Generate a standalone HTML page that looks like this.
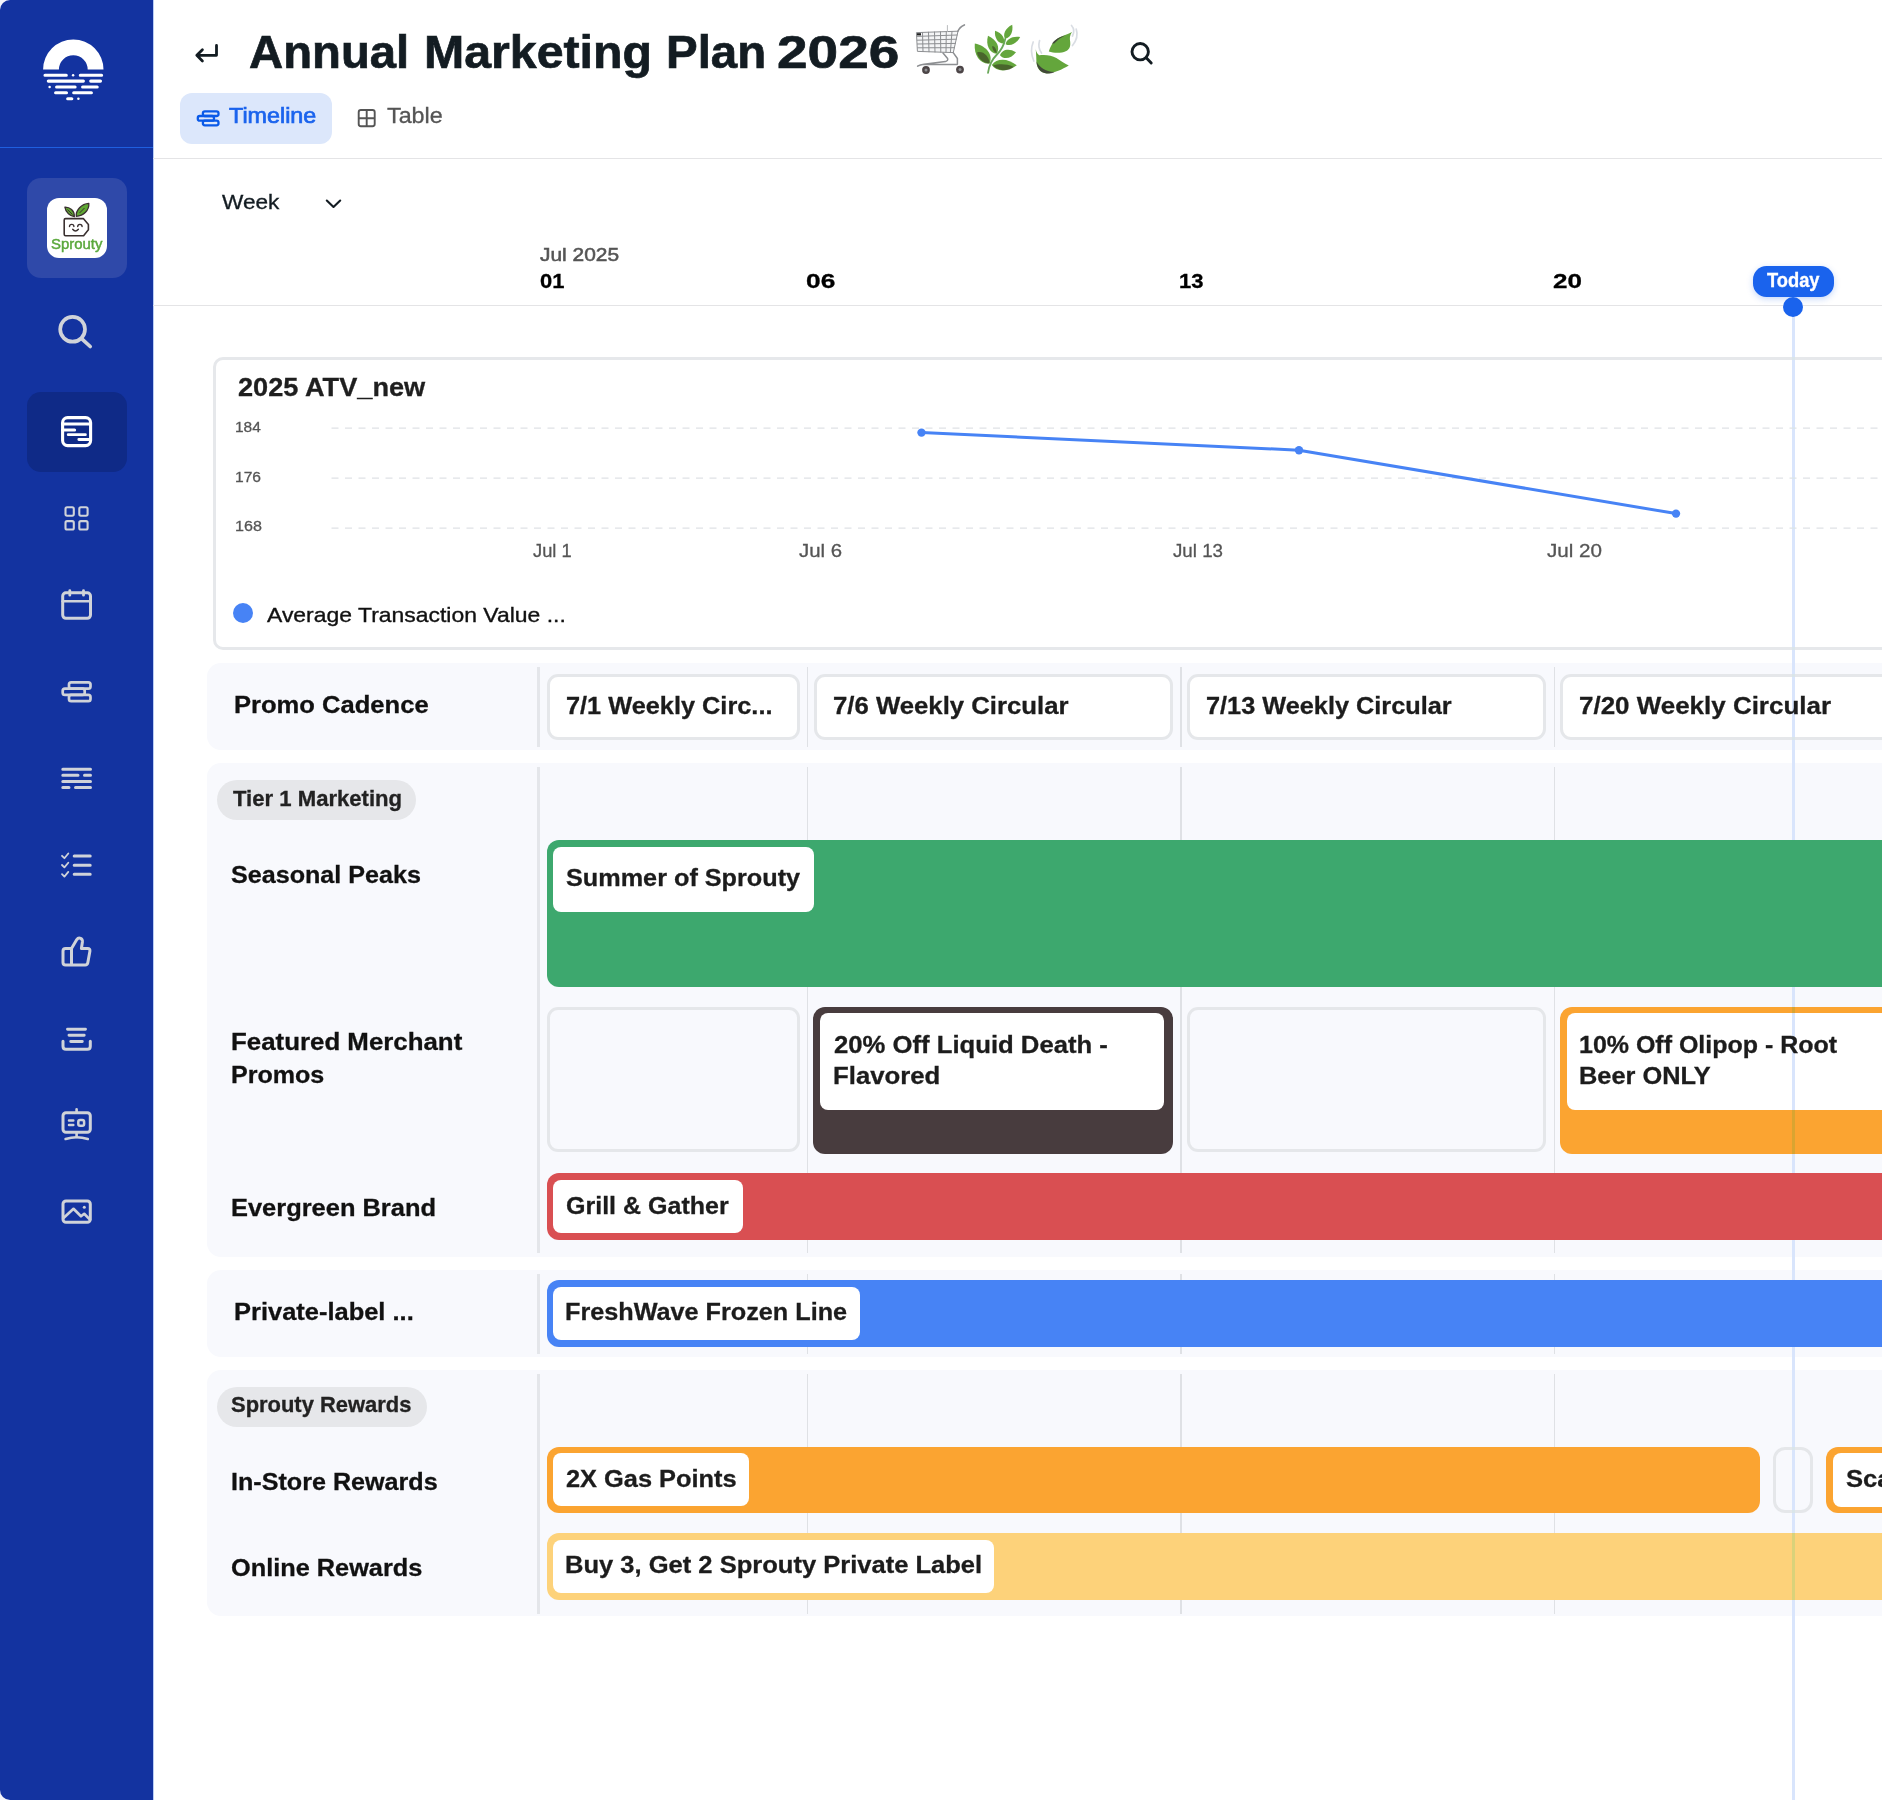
<!DOCTYPE html>
<html lang="en"><head><meta charset="utf-8"><title>Annual Marketing Plan 2026</title>
<style>
html,body{margin:0;padding:0;background:#f3f5fb;}
body{width:1882px;height:1800px;overflow:hidden;font-family:"Liberation Sans",sans-serif;}
#app{position:relative;width:1882px;height:1800px;overflow:hidden;background:#f3f5fb;}
#app div,#app span,#app svg{position:absolute;box-sizing:border-box;}
.t{white-space:nowrap;line-height:1;transform-origin:0 50%;display:block;}
/* sidebar */
#side{left:0;top:0;width:153px;height:1800px;background:#1333a0;border-top-left-radius:10px;border-bottom-left-radius:10px;}
#main{left:153px;top:0;width:1729px;height:1800px;background:#fff;border-left:1px solid #b9cdf5;}
#sdiv{left:0;top:147px;width:153px;height:1px;background:#1f5fe0;}
#brandbox{left:27px;top:178px;width:100px;height:100px;border-radius:14px;background:#2f49a9;}
#brandlogo{left:47px;top:198px;width:60px;height:60px;border-radius:12px;background:#fff;}
#navact{left:27px;top:392px;width:100px;height:80px;border-radius:14px;background:#0f2a87;}
/* header */
.hline{left:153px;width:1729px;height:1px;background:#e4e4e6;}
#tabtl{left:180px;top:93px;width:152px;height:51px;border-radius:12px;background:#dce7fb;}
/* today */
#todaypill{left:1753.2px;top:266.1px;width:80.6px;height:30.7px;border-radius:13.5px;background:#1a63ed;box-shadow:0 2px 6px rgba(26,99,237,.25);}
#todaydot{left:1783.1px;top:296.8px;width:20.2px;height:20.2px;border-radius:50%;background:#1a63ed;}
#todayline{left:1791.9px;top:306px;width:3px;height:1494px;background:#d9e5fc;mix-blend-mode:darken;}
/* chart card */
#chart{left:213.4px;top:357px;width:1700px;height:292.6px;border:3.3px solid #e6e8eb;border-radius:10px;background:#fff;}
#legdot{left:233px;top:602.5px;width:20px;height:20px;border-radius:50%;background:#4783f5;}
/* row panels */
.panel{left:206.8px;width:1700px;background:#f8f9fd;border-radius:14px;}
.vdiv{left:537px;width:2.9px;background:#e4e6ea;}
.wdiv{width:1.5px;background:#dfe1e5;}
.card{border:3px solid #e5e7ea;border-radius:11px;}
.card.w{background:#fff;}
.pill{background:#e6e7ea;border-radius:20px;height:40px;left:216.5px;}
.bar{border-radius:12px;}
.lab{background:#fff;border-radius:8px;}

</style></head>
<body>
<div id="app">
<div id="main"></div>
<div id="side"></div>
<div id="sdiv"></div>
<div id="brandbox"></div>
<div id="brandlogo"></div>
<div id="navact"></div>
<!-- sidebar logo -->
<svg style="left:0;top:0" width="153" height="147" viewBox="0 0 153 147">
  <path d="M43.1 69.6 A30.2 30.2 0 0 1 103.5 69.6 H87.7 A14.4 14.4 0 0 0 58.9 69.6 Z" fill="#fff"/>
  <g stroke="#fff" stroke-width="3.1" stroke-linecap="round" fill="none">
    <path d="M45 75.2H66.3M80.3 75.2H101.6"/>
    <path d="M48.3 81.1H83.4M90.7 81.1H100.5"/>
    <path d="M56.6 87H75.1M82.6 87H97.2"/>
    <path d="M55.6 92.8H66.5M73.7 92.8H91.4"/>
    <path d="M67.7 98.7H71.8"/>
  </g>
  <g fill="#fff"><circle cx="73.1" cy="75.2" r="1.25"/><circle cx="49.6" cy="87" r="1.25"/><circle cx="78.4" cy="98.7" r="1.25"/></g>
</svg>
<!-- brand logo art -->
<svg style="left:47px;top:198px" width="60" height="60" viewBox="47 198 60 60">
  <path d="M74.3 216.6C70.5 216.2 65.6 212.6 64.9 207.2C69.8 207 74.6 210.6 74.3 216.6Z" fill="#5fa832" stroke="#3a3030" stroke-width="1.3" stroke-linejoin="round"/>
  <path d="M76.3 216.3C75.6 210.2 81.5 203.8 88.8 203.4C89.4 210.2 83.6 216 76.3 216.3Z" fill="#5fa832" stroke="#3a3030" stroke-width="1.3" stroke-linejoin="round"/>
  <path d="M67.5 209.5L72.5 214.5M79.5 213L84.5 208" stroke="#3a3030" stroke-width="1" fill="none"/>
  <path d="M65.6 218.6H83.3L88.4 224.6V229.8L83.6 235.7H65.6Q64.2 235.7 64.2 234.3V220Q64.2 218.6 65.6 218.6Z" fill="#fff" stroke="#3a3030" stroke-width="1.6" stroke-linejoin="round"/>
  <path d="M69.5 226.6A2.2 2.2 0 0 1 73.9 226.6M77.7 226.6A2.2 2.2 0 0 1 82.1 226.6" fill="none" stroke="#3a3030" stroke-width="1.4" stroke-linecap="round"/>
  <path d="M72.7 229.3Q75.4 232.6 78.4 229.3" fill="none" stroke="#3a3030" stroke-width="1.4" stroke-linecap="round"/>
</svg>
<!-- search -->
<svg style="left:47px;top:300px" width="60" height="60" viewBox="47 300 60 60" fill="none" stroke="#d0d3d9" stroke-width="3.7" stroke-linecap="round">
  <circle cx="72.6" cy="329.3" r="12.4"/><path d="M81.6 338.6L90.2 346.5"/>
</svg>
<!-- active: plan icon -->
<svg style="left:47px;top:402px" width="60" height="60" viewBox="47 402 60 60" fill="none" stroke="#fff" stroke-width="3.1" stroke-linecap="round">
  <rect x="62.6" y="417.6" width="28" height="28" rx="5"/>
  <path d="M62.6 424H90.6M62.6 430H74.6"/>
  <path d="M68.2 434.7H85.4M78.8 439.5H90" stroke-width="2.8"/>
</svg>
<!-- grid -->
<svg style="left:47px;top:488px" width="60" height="60" viewBox="47 488 60 60" fill="none" stroke="#d0d3d9" stroke-width="2.1">
  <rect x="65.5" y="507.3" width="8.3" height="8.4" rx="1.6"/><rect x="79.3" y="507.3" width="8.3" height="8.4" rx="1.6"/>
  <rect x="65.5" y="521.1" width="8.3" height="8.4" rx="1.6"/><rect x="79.3" y="521.1" width="8.3" height="8.4" rx="1.6"/>
</svg>
<!-- calendar -->
<svg style="left:47px;top:575px" width="60" height="60" viewBox="47 575 60 60" fill="none" stroke="#d0d3d9" stroke-width="3" stroke-linecap="round">
  <rect x="62.7" y="592.8" width="27.8" height="25.5" rx="3.2"/>
  <path d="M62.7 601.2H90.5" stroke-width="2.6"/>
  <path d="M69.8 590.6V595.2M83.5 590.6V595.2" stroke-width="2.8"/>
</svg>
<!-- timeline -->
<svg style="left:47px;top:661px" width="60" height="60" viewBox="47 661 60 60" fill="none" stroke="#d0d3d9" stroke-width="2.7">
  <rect x="69" y="682.3" width="21.5" height="6.3" rx="2.2"/>
  <rect x="62.7" y="688.6" width="22" height="6.3" rx="2.2"/>
  <rect x="69" y="694.9" width="21.5" height="6.3" rx="2.2"/>
</svg>
<!-- lines -->
<svg style="left:47px;top:748px" width="60" height="60" viewBox="47 748 60 60" fill="none" stroke="#d0d3d9" stroke-width="3" stroke-linecap="round">
  <path d="M62.8 769.2H90.5M62.8 775.3H78M84.5 775.3H90.5M62.8 781.5H90.5M62.8 787.5H69M75.5 787.5H90.5"/>
</svg>
<!-- checklist -->
<svg style="left:47px;top:835px" width="60" height="60" viewBox="47 835 60 60" fill="none" stroke="#d0d3d9" stroke-width="3" stroke-linecap="round" stroke-linejoin="round">
  <path d="M74.2 856H90.2M74.2 865.2H90.2M74.2 874.3H90.2"/>
  <path d="M62 855.8L64.4 858.2L68.3 853.5M62 865L64.4 867.4L68.3 862.7M62 874.2L64.4 876.6L68.3 871.9" stroke-width="1.8"/>
</svg>
<!-- thumbs up -->
<svg style="left:47px;top:921px" width="60" height="60" viewBox="47 921 60 60" fill="none" stroke="#d0d3d9" stroke-width="3" stroke-linejoin="round" stroke-linecap="round">
  <path d="M71.5 948.5L76.8 939.6Q78.3 937.3 80.6 938.3Q82.7 939.3 82.4 942L81.4 948.5H87.6Q90.4 948.5 89.9 951.2L87.8 962.8Q87.4 965 85.2 965H65.6Q63 965 63 962.4V951.1Q63 948.5 65.6 948.5H71.5V965"/>
</svg>
<!-- inbox stack -->
<svg style="left:47px;top:1008px" width="60" height="60" viewBox="47 1008 60 60" fill="none" stroke="#d0d3d9" stroke-width="3" stroke-linecap="round" stroke-linejoin="round">
  <path d="M67.5 1029.2H85.5M69 1035.3H84.2M70.7 1041.5H82.3" stroke-width="2.9"/>
  <path d="M63 1041.2V1046.2Q63 1049.2 66 1049.2H87.3Q90.3 1049.2 90.3 1046.2V1041.2"/>
</svg>
<!-- presentation -->
<svg style="left:47px;top:1094px" width="60" height="60" viewBox="47 1094 60 60" fill="none" stroke="#d0d3d9" stroke-width="3" stroke-linecap="round" stroke-linejoin="round">
  <rect x="63" y="1112.7" width="27.3" height="19.6" rx="3"/>
  <path d="M76.6 1109.3V1112.5M76.6 1132.5V1137" stroke-width="2.6"/>
  <path d="M65.6 1139Q76.6 1135.6 87.8 1139" stroke-width="2.6"/>
  <path d="M69 1120.4H73.3M69 1125.1H73.3" stroke-width="2.5"/>
  <rect x="78.3" y="1120" width="5.8" height="5.8" rx="1.8" stroke-width="2.5"/>
</svg>
<!-- image -->
<svg style="left:47px;top:1181px" width="60" height="60" viewBox="47 1181 60 60" fill="none" stroke="#d0d3d9" stroke-width="3" stroke-linejoin="round" stroke-linecap="round">
  <rect x="63" y="1201" width="27.3" height="21.3" rx="3"/>
  <path d="M63.5 1218L73.5 1208.8L81 1216.3L84.2 1213.8L90 1219.6" stroke-width="2.7"/>
  <circle cx="84.3" cy="1207.2" r="1.5" fill="#d0d3d9" stroke="none"/>
</svg>


<!-- header -->
<div class="hline" style="top:158px"></div>
<div class="hline" style="top:305px"></div>
<div id="tabtl"></div>
<!-- back arrow -->
<svg style="left:185px;top:30px" width="60" height="60" viewBox="185 30 60 60" fill="none" stroke="#131c22" stroke-width="2.8" stroke-linecap="round" stroke-linejoin="round">
  <path d="M216.5 45.5V55.3H197.2M202.4 49.8L196.8 55.3L202.4 60.9"/>
</svg>
<!-- timeline tab icon -->
<svg style="left:190px;top:98px" width="40" height="40" viewBox="190 98 40 40" fill="none" stroke="#0a5ae8" stroke-width="2.3">
  <rect x="202.9" y="111.3" width="15.6" height="4.7" rx="2"/>
  <rect x="197.8" y="116" width="16.2" height="4.7" rx="2"/>
  <rect x="202.9" y="120.7" width="15.6" height="4.6" rx="2"/>
</svg>
<!-- table icon -->
<svg style="left:347px;top:98px" width="40" height="40" viewBox="347 98 40 40" fill="none" stroke="#555" stroke-width="1.9">
  <rect x="358.7" y="110" width="16" height="16.2" rx="2.2"/>
  <path d="M366.7 110V126.2M358.7 118.2H374.7"/>
</svg>
<!-- chevron -->
<svg style="left:320px;top:190px" width="30" height="30" viewBox="320 190 30 30" fill="none" stroke="#131c22" stroke-width="2.1" stroke-linecap="round" stroke-linejoin="round">
  <path d="M326.8 200.5L333.5 207L340.2 200.5"/>
</svg>
<!-- header search -->
<svg style="left:1110px;top:22px" width="60" height="60" viewBox="1110 22 60 60" fill="none" stroke="#131c22" stroke-width="2.9" stroke-linecap="round">
  <circle cx="1140.2" cy="51.7" r="8.2"/><path d="M1146.2 57.8L1151.2 62.9"/>
</svg>
<!-- shopping cart emoji -->
<svg style="left:905px;top:14px" width="70" height="70" viewBox="905 14 70 70" fill="none" stroke-linecap="round" stroke-linejoin="round">
  <g stroke="#8d8f92" stroke-width="1">
    <path d="M916.8 32.6L958 31.2L953.3 52.6L917.8 51.4Z" fill="#f4f5f6"/>
    <path d="M917 36.4L957.2 35M917.2 40.2L956.3 39.2M917.4 44L955.4 43.4M917.6 47.8L954.4 47.7"/>
    <path d="M922.5 32.4L923 51.6M928.5 32.2L929 51.8M934.5 32L935 52M940.5 31.8L940.8 52.2M946.3 31.6L946 52.4M952 31.4L950.4 52.5"/>
    <path d="M947.4 25.5V31.4" stroke="#b9bbbe"/>
  </g>
  <path d="M957.9 31.2Q959.5 27 964.4 24.9" stroke="#8d8f92" stroke-width="1.6"/>
  <path d="M953.2 52.6L957.4 58.5V64.2M943 53L947.6 58.6Q948.4 60.6 945.4 61.6L924 64.2Q920 64.6 917.6 66.2M924 64.4H957" stroke="#8d8f92" stroke-width="1.5"/>
  <rect x="917" y="33.2" width="4" height="2.2" fill="#222" stroke="none"/>
  <circle cx="926" cy="70" r="3.9" fill="#4c4547" stroke="none"/><circle cx="960" cy="69.6" r="3.9" fill="#4c4547" stroke="none"/>
  <circle cx="926" cy="70" r="1.5" fill="#8d8f92" stroke="none"/><circle cx="960" cy="69.6" r="1.5" fill="#8d8f92" stroke="none"/>
</svg>
<!-- herb emoji -->
<svg style="left:965px;top:14px" width="70" height="70" viewBox="965 14 70 70">
  <path d="M988 72.8Q989.5 62 996.5 55Q1003.5 48 1005.2 39" fill="none" stroke="#6aa85a" stroke-width="1.8" stroke-linecap="round"/>
  <g fill="#64a63c">
    <path d="M1005.0 38.8C1010.1 38.2 1013.5 32.2 1012.2 24.8C1005.4 28.0 1002.5 34.3 1005.0 38.8Z"/>
    <path d="M1003.5 43.6C1005.6 38.9 1002.2 33.1 995.0 30.8C994.3 38.3 998.3 43.7 1003.5 43.6Z"/>
    <path d="M1005.6 44.2C1010.1 46.7 1016.7 43.9 1020.2 37.0C1012.6 35.6 1006.3 39.1 1005.6 44.2Z"/>
    <path d="M996.6 53.8C1000.5 48.0 997.1 39.8 988.0 35.8C985.4 45.4 989.6 53.1 996.6 53.8Z"/>
    <path d="M1000.0 55.2C1003.8 59.8 1011.0 58.9 1016.0 52.2C1008.9 47.8 1001.9 49.5 1000.0 55.2Z"/>
    <path d="M989.6 63.6C993.2 55.4 987.2 46.2 974.8 43.6C973.7 56.2 980.7 64.6 989.6 63.6Z"/>
    <path d="M991.8 65.0C996.2 71.8 1007.2 72.5 1016.8 65.3C1007.4 57.6 996.4 58.1 991.8 65.0Z"/>
  </g>
  <g fill="#33301f" opacity=".55">
    <path d="M989.6 63.4C982 63 977.5 57 977 52.5C983 50.5 989 56 989.6 63.4Z"/>
    <path d="M993 65.6C999 72 1009.5 71.5 1013.5 66.8C1006 63.5 998 64 993 65.6Z"/>
    <path d="M996.4 53C993.5 51.5 992 48.5 992.2 46C995 46.5 996.8 49.5 996.4 53Z"/>
  </g>
</svg>
<!-- leaf fluttering emoji -->
<svg style="left:1020px;top:14px" width="70" height="70" viewBox="1020 14 70 70">
  <g fill="none" stroke="#d3d8df" stroke-width="1.7" stroke-linecap="round" opacity=".85">
    <path d="M1071.5 25.5Q1075.5 30 1072.5 36M1076.2 29Q1079 37.5 1072.5 45.5"/>
    <path d="M1033.2 42Q1029.5 51 1033.8 61M1039.6 40.5Q1037.5 47.5 1041.5 53"/>
  </g>
  <path d="M1048.8 51.5C1051.5 43 1055.5 38.6 1062 36.2C1066.5 34.8 1069.5 33.6 1072 32.1C1069.6 35.6 1069.6 38.6 1070.2 41.8C1071 48.6 1067.6 51.6 1062 52.5C1056.5 53.2 1052.5 52.6 1048.8 51.5Z" fill="#64a63c"/>
  <path d="M1035.3 45.4C1035.6 50.5 1036.8 53.6 1039.2 55.2C1045.5 54.4 1051.6 55.2 1056.4 58C1061.2 61.2 1064.8 63.8 1068.8 65.6C1062 69.6 1054.6 73 1046.8 73.6C1039.6 72.4 1036.6 67.4 1036.4 61.4C1036.3 54.6 1035.9 50 1035.3 45.4Z" fill="#64a63c"/>
  <path d="M1052 43.4Q1056.2 37.8 1065.4 35.2Q1058.6 38.4 1054.2 43.4ZM1036.5 61.4C1037 68.4 1040.4 72.4 1046.8 73.6C1050.4 73.6 1052.6 73 1054.6 72C1045 71.4 1039.6 67.4 1036.5 61.4Z" fill="#3a3238" opacity=".8"/>
</svg>


<!-- chart card -->
<div id="chart"></div>
<svg id="chartsvg" style="left:0;top:0" width="1882" height="700" viewBox="0 0 1882 700">
  <g stroke="#dfe2e6" stroke-width="1.3" stroke-dasharray="7 6.5" fill="none">
    <path d="M331.5 428.2H1882M331.5 478.2H1882M331.5 528.2H1882"/>
  </g>
  <polyline points="921.5,432.6 1299,450.2 1676,513.6" fill="none" stroke="#4783f5" stroke-width="3" stroke-linejoin="round"/>
  <g fill="#4783f5"><circle cx="921.5" cy="432.6" r="4.2"/><circle cx="1299" cy="450.2" r="4.2"/><circle cx="1676" cy="513.6" r="4.2"/></g>
</svg>
<div id="legdot"></div>

<!-- panels -->
<div class="panel" style="top:663px;height:87px"></div>
<div class="panel" style="top:763px;height:493.6px"></div>
<div class="panel" style="top:1270px;height:86.6px"></div>
<div class="panel" style="top:1369.6px;height:246.8px"></div>

<div class="vdiv" style="top:666.5px;height:80px"></div>
<div class="vdiv" style="top:767px;height:486px"></div>
<div class="vdiv" style="top:1273.5px;height:80px"></div>
<div class="vdiv" style="top:1373.5px;height:240px"></div>

<div class="wdiv" style="left:806.8px;top:666.5px;height:80px"></div>
<div class="wdiv" style="left:1180.1px;top:666.5px;height:80px"></div>
<div class="wdiv" style="left:1553.6px;top:666.5px;height:80px"></div>
<div class="wdiv" style="left:806.8px;top:767px;height:486px"></div>
<div class="wdiv" style="left:1180.1px;top:767px;height:486px"></div>
<div class="wdiv" style="left:1553.6px;top:767px;height:486px"></div>
<div class="wdiv" style="left:806.8px;top:1273.5px;height:80px"></div>
<div class="wdiv" style="left:1180.1px;top:1273.5px;height:80px"></div>
<div class="wdiv" style="left:1553.6px;top:1273.5px;height:80px"></div>
<div class="wdiv" style="left:806.8px;top:1373.5px;height:240px"></div>
<div class="wdiv" style="left:1180.1px;top:1373.5px;height:240px"></div>
<div class="wdiv" style="left:1553.6px;top:1373.5px;height:240px"></div>

<!-- promo cadence cards -->
<div class="card w" style="left:547px;top:674px;width:253px;height:65.5px"></div>
<div class="card w" style="left:814px;top:674px;width:358.5px;height:65.5px"></div>
<div class="card w" style="left:1187px;top:674px;width:359px;height:65.5px"></div>
<div class="card w" style="left:1560px;top:674px;width:359px;height:65.5px"></div>

<!-- group pills -->
<div class="pill" style="top:780px;width:199.5px"></div>
<div class="pill" style="top:1386.5px;width:210px"></div>

<!-- seasonal peaks -->
<div class="bar" style="left:546.6px;top:840px;width:1400px;height:146.6px;background:#3da86e"></div>
<div class="lab" style="left:553.2px;top:846.7px;width:260.8px;height:65px"></div>

<!-- featured merchant promos -->
<div class="card" style="left:547px;top:1006.7px;width:252.8px;height:145.6px"></div>
<div class="bar" style="left:813.3px;top:1006.6px;width:360px;height:147px;background:#483c3e"></div>
<div class="lab" style="left:819.8px;top:1013px;width:343.8px;height:97px"></div>
<div class="card" style="left:1186.7px;top:1006.7px;width:359.1px;height:145.6px"></div>
<div class="bar" style="left:1560px;top:1006.5px;width:400px;height:147px;background:#fba431"></div>
<div class="lab" style="left:1566.7px;top:1013px;width:400px;height:96.8px"></div>

<!-- evergreen -->
<div class="bar" style="left:546.5px;top:1173.2px;width:1400px;height:66.8px;background:#d94f52"></div>
<div class="lab" style="left:553.1px;top:1179.8px;width:189.9px;height:53.5px"></div>

<!-- private label -->
<div class="bar" style="left:546.5px;top:1280px;width:1400px;height:66.7px;background:#4783f5"></div>
<div class="lab" style="left:553.1px;top:1286.7px;width:307.4px;height:53.3px"></div>

<!-- in-store -->
<div class="bar" style="left:546.5px;top:1446.6px;width:1213.5px;height:66.8px;background:#fba431"></div>
<div class="lab" style="left:553.1px;top:1453.2px;width:196.4px;height:53.2px"></div>
<div class="card" style="left:1773.2px;top:1446.9px;width:40px;height:66.2px;border-radius:12px"></div>
<div class="bar" style="left:1826.4px;top:1446.6px;width:200px;height:66.8px;background:#fba431"></div>
<div class="lab" style="left:1833.2px;top:1453.3px;width:200px;height:53.3px"></div>

<!-- online -->
<div class="bar" style="left:546.5px;top:1533.3px;width:1400px;height:66.7px;background:#fdd27a"></div>
<div class="lab" style="left:553.1px;top:1540px;width:441.4px;height:53.3px"></div>

<!-- today marker -->
<div id="todayline"></div>
<div id="todaypill"></div>
<div id="todaydot"></div>

<div id="texts">
<span class="t" id="t0" style="left:249px;top:28px;font-size:47px;font-weight:700;color:#131c22;transform:scaleX(1.0058);-webkit-text-stroke:0.7px #131c22;">Annual</span>
<span class="t" id="t1" style="left:424px;top:28px;font-size:47px;font-weight:700;color:#131c22;transform:scaleX(1.0269);-webkit-text-stroke:0.7px #131c22;">Marketing</span>
<span class="t" id="t2" style="left:666px;top:28px;font-size:47px;font-weight:700;color:#131c22;transform:scaleX(1.0102);-webkit-text-stroke:0.7px #131c22;">Plan</span>
<span class="t" id="t3" style="left:777px;top:28px;font-size:47px;font-weight:700;color:#131c22;transform:scaleX(1.1694);-webkit-text-stroke:0.7px #131c22;">2026</span>
<span class="t" id="t4" style="left:229px;top:105px;font-size:22px;font-weight:400;color:#1a63ed;transform:scaleX(1.0601);-webkit-text-stroke:0.7px #1a63ed;">Timeline</span>
<span class="t" id="t5" style="left:387px;top:105px;font-size:22px;font-weight:400;color:#555;transform:scaleX(1.0594);-webkit-text-stroke:0.3px;">Table</span>
<span class="t" id="t6" style="left:222px;top:191px;font-size:21px;font-weight:400;color:#131c22;transform:scaleX(1.0758);-webkit-text-stroke:0.35px;">Week</span>
<span class="t" id="t7" style="left:540px;top:245px;font-size:19px;font-weight:400;color:#555;transform:scaleX(1.1006);-webkit-text-stroke:0.55px;">Jul 2025</span>
<span class="t" id="t8" style="left:540px;top:270px;font-size:21px;font-weight:700;color:#000;transform:scaleX(1.0460);-webkit-text-stroke:0.3px;">01</span>
<span class="t" id="t9" style="left:806px;top:270px;font-size:21px;font-weight:700;color:#000;transform:scaleX(1.2530);-webkit-text-stroke:0.3px;">06</span>
<span class="t" id="t10" style="left:1179px;top:270px;font-size:21px;font-weight:700;color:#000;transform:scaleX(1.0489);-webkit-text-stroke:0.3px;">13</span>
<span class="t" id="t11" style="left:1553px;top:270px;font-size:21px;font-weight:700;color:#000;transform:scaleX(1.2379);-webkit-text-stroke:0.3px;">20</span>
<span class="t" id="t12" style="left:1767px;top:271px;font-size:19.3px;font-weight:700;color:#fff;transform:scaleX(0.9494);-webkit-text-stroke:0.3px;">Today</span>
<span class="t" id="t13" style="left:238px;top:375px;font-size:25px;font-weight:700;color:#1f1f1f;transform:scaleX(1.0867);-webkit-text-stroke:0.3px;">2025 ATV_new</span>
<span class="t" id="t14" style="left:235px;top:419px;font-size:15.4px;font-weight:400;color:#555;transform:scaleX(1.0070);-webkit-text-stroke:0.3px;">184</span>
<span class="t" id="t15" style="left:235px;top:469px;font-size:15.4px;font-weight:400;color:#555;transform:scaleX(1.0129);-webkit-text-stroke:0.3px;">176</span>
<span class="t" id="t16" style="left:235px;top:518px;font-size:15.4px;font-weight:400;color:#555;transform:scaleX(1.0454);-webkit-text-stroke:0.3px;">168</span>
<span class="t" id="t17" style="left:533px;top:542px;font-size:18.5px;font-weight:400;color:#555;transform:scaleX(0.9896);-webkit-text-stroke:0.3px;">Jul 1</span>
<span class="t" id="t18" style="left:799px;top:542px;font-size:18.5px;font-weight:400;color:#555;transform:scaleX(1.1012);-webkit-text-stroke:0.3px;">Jul 6</span>
<span class="t" id="t19" style="left:1173px;top:542px;font-size:18.5px;font-weight:400;color:#555;transform:scaleX(1.0125);-webkit-text-stroke:0.3px;">Jul 13</span>
<span class="t" id="t20" style="left:1547px;top:542px;font-size:18.5px;font-weight:400;color:#555;transform:scaleX(1.1149);-webkit-text-stroke:0.3px;">Jul 20</span>
<span class="t" id="t21" style="left:267px;top:604px;font-size:21px;font-weight:400;color:#111;transform:scaleX(1.0922);-webkit-text-stroke:0.35px;">Average Transaction Value ...</span>
<span class="t" id="t22" style="left:234px;top:693px;font-size:24.4px;font-weight:700;color:#111;transform:scaleX(1.0480);-webkit-text-stroke:0.3px;">Promo Cadence</span>
<span class="t" id="t23" style="left:233px;top:788px;font-size:22px;font-weight:700;color:#222;transform:scaleX(1.0048);-webkit-text-stroke:0.3px;">Tier 1 Marketing</span>
<span class="t" id="t24" style="left:231px;top:863px;font-size:24.4px;font-weight:700;color:#111;transform:scaleX(1.0300);-webkit-text-stroke:0.3px;">Seasonal Peaks</span>
<span class="t" id="t25" style="left:231px;top:1030px;font-size:24.4px;font-weight:700;color:#111;transform:scaleX(1.0598);-webkit-text-stroke:0.3px;">Featured Merchant</span>
<span class="t" id="t26" style="left:231px;top:1063px;font-size:24.4px;font-weight:700;color:#111;transform:scaleX(1.0272);-webkit-text-stroke:0.3px;">Promos</span>
<span class="t" id="t27" style="left:231px;top:1196px;font-size:24.4px;font-weight:700;color:#111;transform:scaleX(1.0428);-webkit-text-stroke:0.3px;">Evergreen Brand</span>
<span class="t" id="t28" style="left:234px;top:1300px;font-size:24.4px;font-weight:700;color:#111;transform:scaleX(1.0439);-webkit-text-stroke:0.3px;">Private-label ...</span>
<span class="t" id="t29" style="left:231px;top:1394px;font-size:22px;font-weight:700;color:#222;transform:scaleX(0.9967);-webkit-text-stroke:0.3px;">Sprouty Rewards</span>
<span class="t" id="t30" style="left:231px;top:1470px;font-size:24.4px;font-weight:700;color:#111;transform:scaleX(1.0301);-webkit-text-stroke:0.3px;">In-Store Rewards</span>
<span class="t" id="t31" style="left:231px;top:1556px;font-size:24.4px;font-weight:700;color:#111;transform:scaleX(1.0381);-webkit-text-stroke:0.3px;">Online Rewards</span>
<span class="t" id="t32" style="left:566px;top:694px;font-size:24.4px;font-weight:700;color:#1c1c1c;transform:scaleX(1.0382);-webkit-text-stroke:0.3px;">7/1 Weekly Circ...</span>
<span class="t" id="t33" style="left:833px;top:694px;font-size:24.4px;font-weight:700;color:#1c1c1c;transform:scaleX(1.0546);-webkit-text-stroke:0.3px;">7/6 Weekly Circular</span>
<span class="t" id="t34" style="left:1206px;top:694px;font-size:24.4px;font-weight:700;color:#1c1c1c;transform:scaleX(1.0375);-webkit-text-stroke:0.3px;">7/13 Weekly Circular</span>
<span class="t" id="t35" style="left:1579px;top:694px;font-size:24.4px;font-weight:700;color:#1c1c1c;transform:scaleX(1.0641);-webkit-text-stroke:0.3px;">7/20 Weekly Circular</span>
<span class="t" id="t36" style="left:566px;top:866px;font-size:24.4px;font-weight:700;color:#1c1c1c;transform:scaleX(1.0344);-webkit-text-stroke:0.3px;">Summer of Sprouty</span>
<span class="t" id="t37" style="left:834px;top:1033px;font-size:24.4px;font-weight:700;color:#1c1c1c;transform:scaleX(1.0526);-webkit-text-stroke:0.3px;">20% Off Liquid Death -</span>
<span class="t" id="t38" style="left:833px;top:1064px;font-size:24.4px;font-weight:700;color:#1c1c1c;transform:scaleX(1.0556);-webkit-text-stroke:0.3px;">Flavored</span>
<span class="t" id="t39" style="left:1579px;top:1033px;font-size:24.4px;font-weight:700;color:#1c1c1c;transform:scaleX(1.0241);-webkit-text-stroke:0.3px;">10% Off Olipop - Root</span>
<span class="t" id="t40" style="left:1579px;top:1064px;font-size:24.4px;font-weight:700;color:#1c1c1c;transform:scaleX(1.0401);-webkit-text-stroke:0.3px;">Beer ONLY</span>
<span class="t" id="t41" style="left:566px;top:1194px;font-size:24.4px;font-weight:700;color:#1c1c1c;transform:scaleX(1.0258);-webkit-text-stroke:0.3px;">Grill &amp; Gather</span>
<span class="t" id="t42" style="left:565px;top:1300px;font-size:24.4px;font-weight:700;color:#1c1c1c;transform:scaleX(1.0338);-webkit-text-stroke:0.3px;">FreshWave Frozen Line</span>
<span class="t" id="t43" style="left:566px;top:1467px;font-size:24.4px;font-weight:700;color:#1c1c1c;transform:scaleX(1.0400);-webkit-text-stroke:0.3px;">2X Gas Points</span>
<span class="t" id="t44" style="left:565px;top:1553px;font-size:24.4px;font-weight:700;color:#1c1c1c;transform:scaleX(1.0468);-webkit-text-stroke:0.3px;">Buy 3, Get 2 Sprouty Private Label</span>
<span class="t" id="t45" style="left:1846px;top:1467px;font-size:24.4px;font-weight:700;color:#1c1c1c;transform:scaleX(1.0500);-webkit-text-stroke:0.3px;">Scan</span>
<span class="t" id="t46" style="left:51px;top:237px;font-size:14.6px;font-weight:400;color:#5aa83c;transform:scaleX(1.0224);-webkit-text-stroke:0.45px #5aa83c;">Sprouty</span>
</div>
</div>
</body></html>
